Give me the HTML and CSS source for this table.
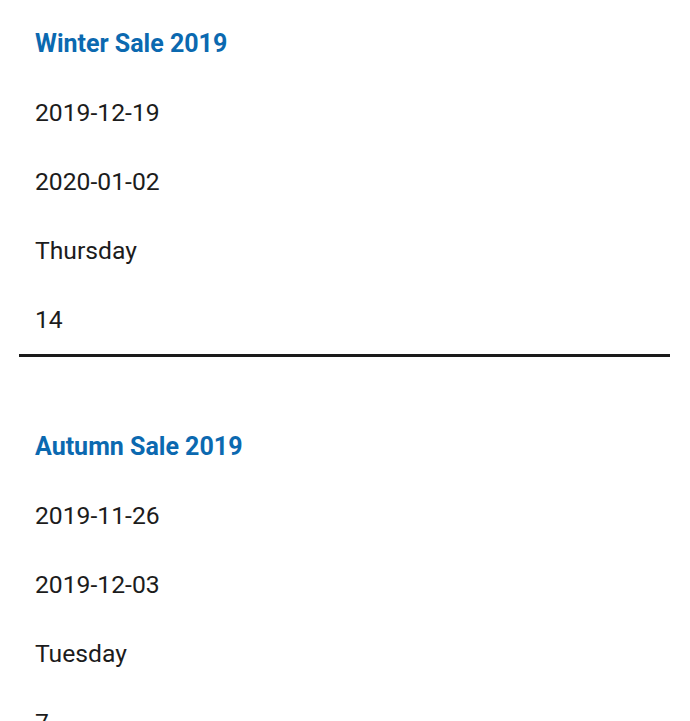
FILE: index.html
```html
<!DOCTYPE html>
<html lang="en">
<head>
<meta charset="utf-8">
<title>Sales</title>
<link rel="stylesheet" href="styles.css">
</head>
<body>
<main class="list">
  <section class="sale">
    <h2 class="sale-title">Winter Sale 2019</h2>
    <p class="sale-row">2019-12-19</p>
    <p class="sale-row">2020-01-02</p>
    <p class="sale-row">Thursday</p>
    <p class="sale-row">14</p>
  </section>
  <section class="sale">
    <h2 class="sale-title">Autumn Sale 2019</h2>
    <p class="sale-row">2019-11-26</p>
    <p class="sale-row">2019-12-03</p>
    <p class="sale-row">Tuesday</p>
    <p class="sale-row">7</p>
  </section>
</main>
</body>
</html>
```
FILE: styles.css
```css
html, body {
  margin: 0;
  padding: 0;
  background: #ffffff;
}
body {
  font-family: Roboto, "Noto Sans", sans-serif;
  color: #1c1c1c;
  overflow: hidden;
}
.list {
  display: flex;
  flex-direction: column;
  gap: 55px;
  padding: 9px 20px 0 19px;
}
.sale {
  border-bottom: 3px solid #1a1a1a;
  padding: 0 16px;
}
.sale-title {
  margin: 0;
  font-size: 25px;
  font-weight: 700;
  line-height: 69px;
  color: #0b69b0;
}
.sale-row {
  margin: 0;
  font-size: 24.7px;
  font-weight: 400;
  line-height: 69px;
}
```
